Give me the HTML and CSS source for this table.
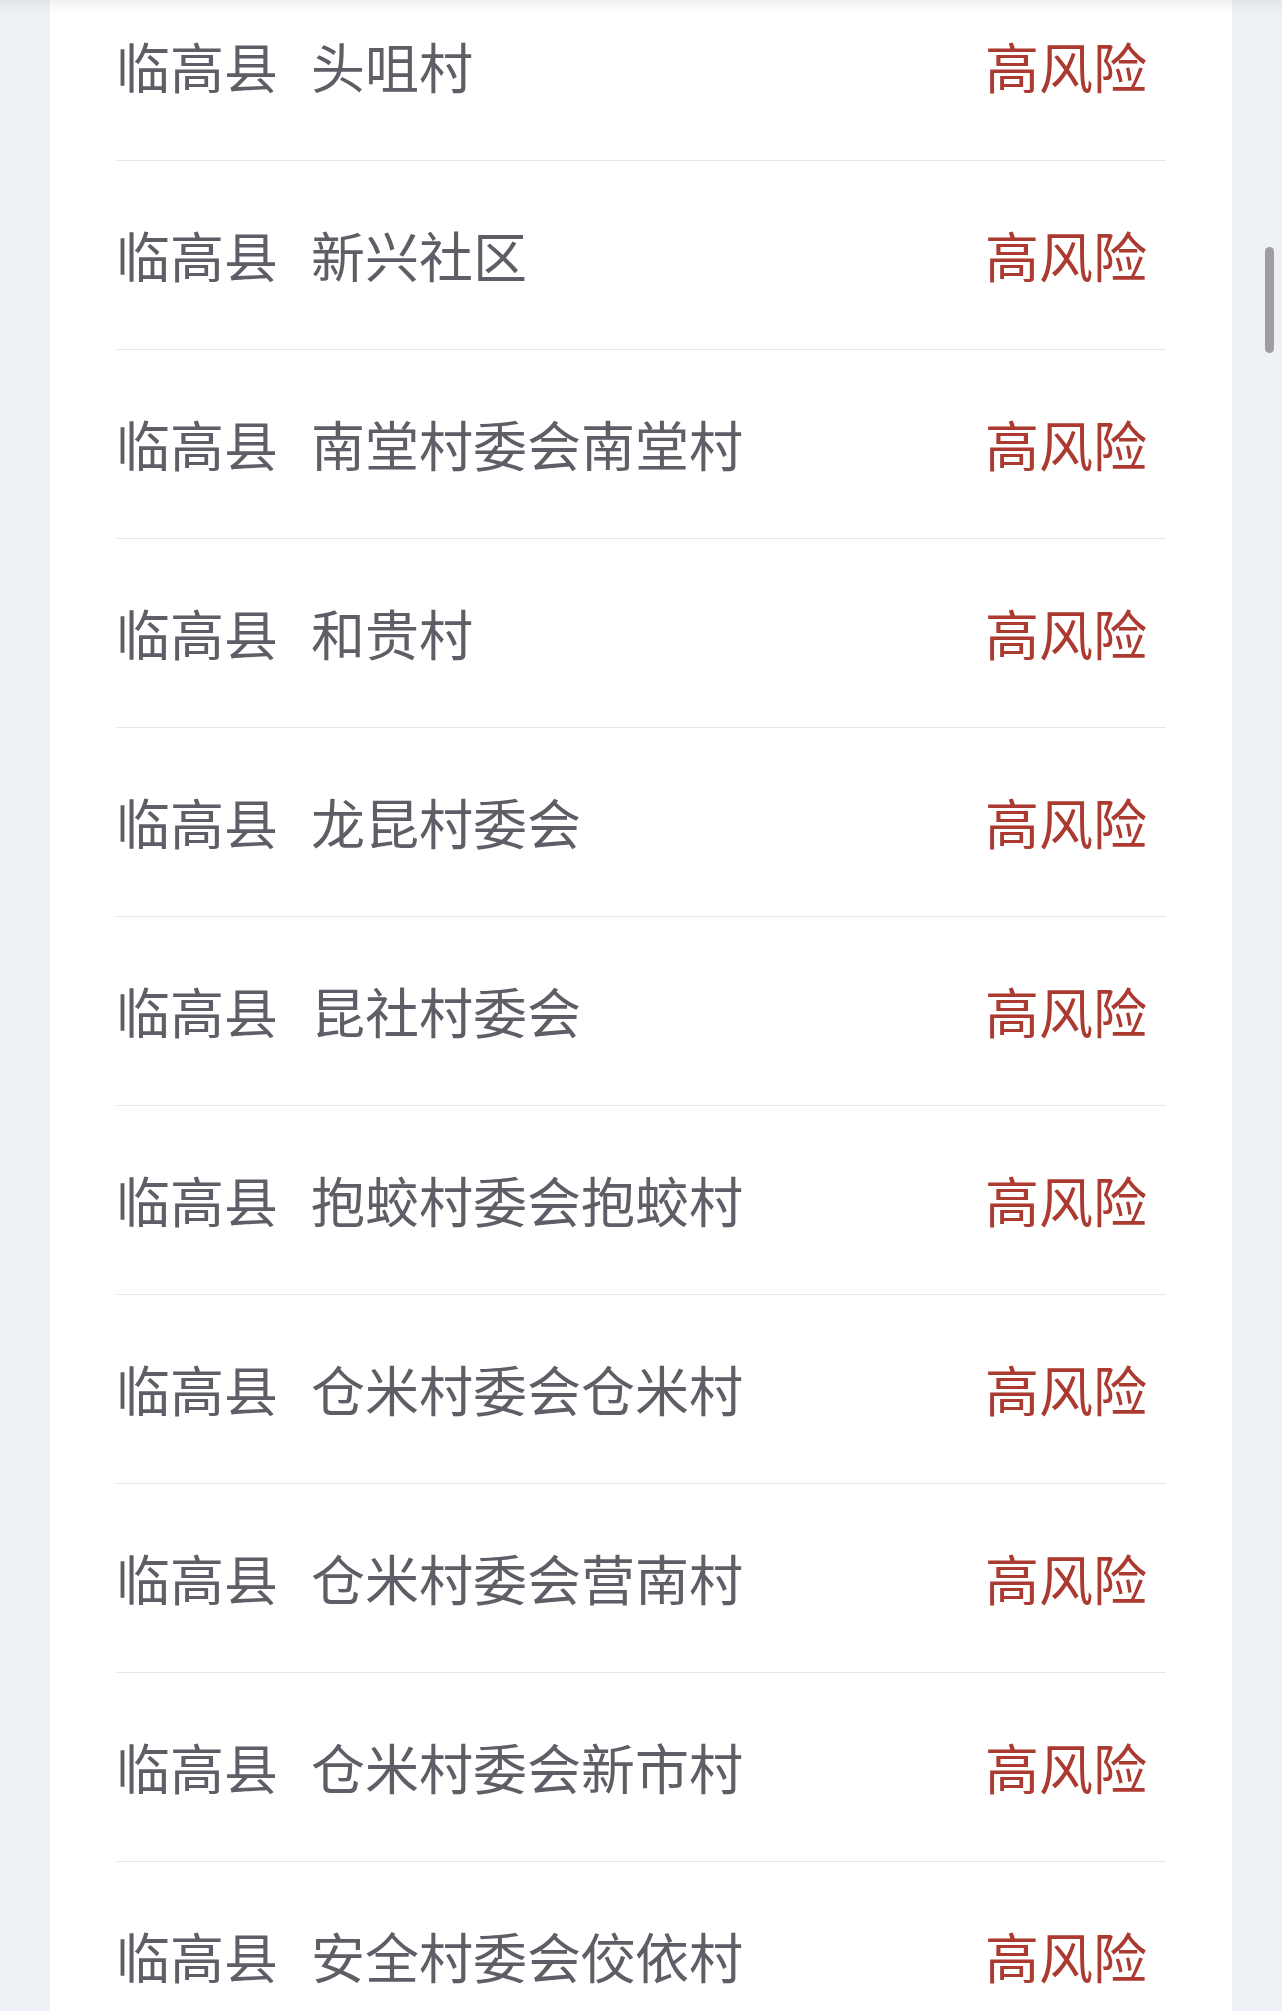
FILE: index.html
```html
<!DOCTYPE html>
<html lang="zh-CN">
<head>
<meta charset="utf-8">
<link rel="stylesheet" href="styles.css">
</head>
<body>
<div class="top-shade"></div>
<main class="card">
  <ul class="list">
    <li class="row"><span class="place"><span class="county">临高县</span><span class="village">头咀村</span></span><span class="risk">高风险</span></li>
    <li class="row"><span class="place"><span class="county">临高县</span><span class="village">新兴社区</span></span><span class="risk">高风险</span></li>
    <li class="row"><span class="place"><span class="county">临高县</span><span class="village">南堂村委会南堂村</span></span><span class="risk">高风险</span></li>
    <li class="row"><span class="place"><span class="county">临高县</span><span class="village">和贵村</span></span><span class="risk">高风险</span></li>
    <li class="row"><span class="place"><span class="county">临高县</span><span class="village">龙昆村委会</span></span><span class="risk">高风险</span></li>
    <li class="row"><span class="place"><span class="county">临高县</span><span class="village">昆社村委会</span></span><span class="risk">高风险</span></li>
    <li class="row"><span class="place"><span class="county">临高县</span><span class="village">抱蛟村委会抱蛟村</span></span><span class="risk">高风险</span></li>
    <li class="row"><span class="place"><span class="county">临高县</span><span class="village">仓米村委会仓米村</span></span><span class="risk">高风险</span></li>
    <li class="row"><span class="place"><span class="county">临高县</span><span class="village">仓米村委会营南村</span></span><span class="risk">高风险</span></li>
    <li class="row"><span class="place"><span class="county">临高县</span><span class="village">仓米村委会新市村</span></span><span class="risk">高风险</span></li>
    <li class="row"><span class="place"><span class="county">临高县</span><span class="village">安全村委会佼依村</span></span><span class="risk">高风险</span></li>
  </ul>
</main>
<div class="scroll-thumb"></div>
</body>
</html>
```

FILE: styles.css
```css
html, body {
  margin: 0;
  padding: 0;
  height: 2011px;
  overflow: hidden;
  background: #eef1f5;
  font-family: "Noto Sans CJK SC", "Noto Sans", sans-serif;
}

.card {
  margin: -28px 0 0 50px;
  width: 1182px;
  background: #ffffff;
}

.list {
  list-style: none;
  margin: 0;
  padding: 0 66px 0 66px;
}

.row {
  height: 188px;
  border-bottom: 1px solid #e6e6e8;
  display: flex;
  align-items: center;
  justify-content: space-between;
  padding: 0 19px 0 0;
  font-size: 54px;
  line-height: 1;
}

.place {
  color: #5e5e66;
  display: flex;
}

.village {
  margin-left: 33px;
}

.risk {
  color: #ab3a30;
}

.top-shade {
  position: fixed;
  top: 0;
  left: 0;
  right: 0;
  height: 14px;
  background: linear-gradient(to bottom, rgba(0, 0, 0, 0.05), rgba(0, 0, 0, 0));
  z-index: 2;
}

.scroll-thumb {
  position: fixed;
  left: 1265px;
  top: 247px;
  width: 9px;
  height: 106px;
  border-radius: 5px;
  background: #9e9e9e;
}
```
